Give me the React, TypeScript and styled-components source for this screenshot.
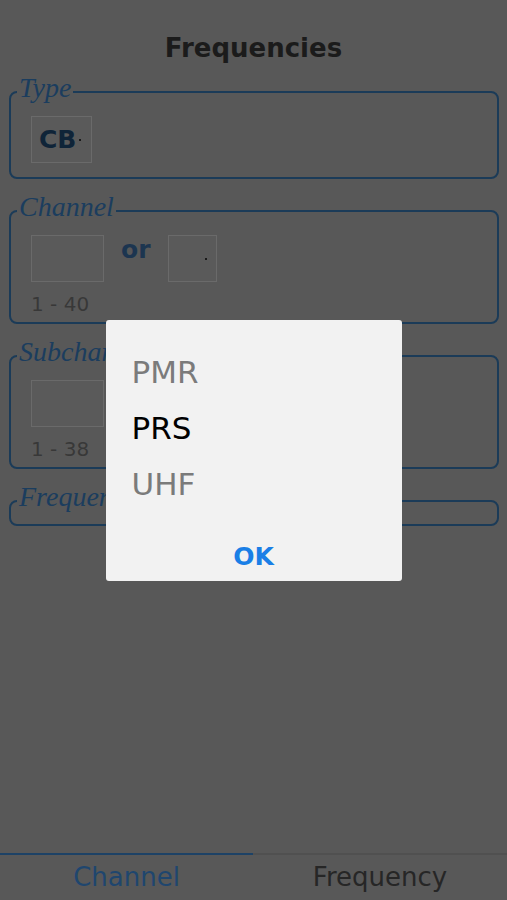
import styled, { createGlobalStyle } from "styled-components";

const GlobalStyle = createGlobalStyle`
  html, body {
    margin: 0;
    padding: 0;
    background: #585858;
  }
  body {
    font-family: "DejaVu Sans", sans-serif;
  }
`;

const Screen = styled.div`
  min-height: 100vh;
  display: flex;
  flex-direction: column;
`;

const Title = styled.h1`
  margin: 0;
  padding-top: 28px;
  font-size: 26px;
  line-height: 40px;
  font-weight: bold;
  text-align: center;
  color: #1b1b1b;
`;

const Form = styled.div`
  display: flex;
  flex-direction: column;
  gap: 14px;
  padding: 6px 8px 0 9px;
`;

// $bottom: space under the content, the Type group has no hint line
const Group = styled.fieldset<{ $bottom?: number; $empty?: boolean }>`
  margin: 0;
  min-width: 0;
  border: 2px solid #1b3b58;
  border-radius: 8px;
  padding: ${(p) =>
    p.$empty ? "0 6px 5px" : `6px 6px ${p.$bottom ?? 6}px`};
`;

const Legend = styled.legend`
  padding: 0 2px 8px;
  font-family: "Liberation Serif", serif;
  font-style: italic;
  font-size: 28px;
  line-height: 28px;
  color: #1b3d5e;
`;

const Content = styled.div`
  margin-left: 14px;
`;

const Row = styled.div`
  display: flex;
  align-items: flex-start;
  gap: 17px;
`;

const Box = styled.div<{ $w: number }>`
  box-sizing: border-box;
  width: ${(p) => p.$w}px;
  height: 47px;
  display: flex;
  align-items: center;
  padding: 0 7px;
  border: 1px solid #6a6a6a;
  background: #5a5a5a;
`;

const BoxText = styled.span`
  font-size: 25px;
  font-weight: bold;
  color: #0f2438;
`;

const Caret = styled.span<{ $push?: boolean }>`
  width: 2px;
  height: 2px;
  margin-left: ${(p) => (p.$push ? "auto" : "3px")};
  margin-right: ${(p) => (p.$push ? "2px" : "0")};
  background: #1a1a1a;
`;

const Or = styled.span`
  font-size: 25px;
  font-weight: bold;
  line-height: 30px;
  color: #1c3550;
`;

const Hint = styled.div`
  margin-top: 10px;
  font-size: 20px;
  line-height: 24px;
  color: #383838;
`;

const Tabs = styled.div`
  margin-top: auto;
  display: grid;
  grid-template-columns: 253px 1fr;
`;

const Tab = styled.div<{ $active?: boolean }>`
  height: 47px;
  box-sizing: border-box;
  border-top: 2px solid ${(p) => (p.$active ? "#1d4266" : "#505050")};
  text-align: center;
  font-size: 26px;
  line-height: 45px;
  color: ${(p) => (p.$active ? "#1f466e" : "#262626")};
`;

const Overlay = styled.div`
  position: fixed;
  inset: 0;
  display: flex;
  align-items: center;
  justify-content: center;
`;

const Dialog = styled.div`
  width: 296px;
  padding-top: 24px;
  border-radius: 3px;
  background: #f2f2f2;
`;

const Option = styled.div<{ $selected?: boolean }>`
  padding-left: 26px;
  font-size: 31px;
  line-height: 56px;
  color: ${(p) => (p.$selected ? "#000000" : "#7b7b7b")};
`;

const Footer = styled.div`
  padding-top: 21px;
  text-align: center;
`;

const OkButton = styled.button`
  border: none;
  background: none;
  padding: 0;
  font-family: "DejaVu Sans", sans-serif;
  font-size: 25px;
  font-weight: bold;
  line-height: 48px;
  color: #1a7fe6;
`;

const options = ["PMR", "PRS", "UHF"];

export default function App() {
  return (
    <>
      <GlobalStyle />
      <Screen>
        <Title>Frequencies</Title>
        <Form>
          <Group $bottom={14}>
            <Legend>Type</Legend>
            <Content>
              <Box $w={61}>
                <BoxText>CB</BoxText>
                <Caret />
              </Box>
            </Content>
          </Group>
          <Group>
            <Legend>Channel</Legend>
            <Content>
              <Row>
                <Box $w={73} />
                <Or>or</Or>
                <Box $w={49}>
                  <Caret $push />
                </Box>
              </Row>
              <Hint>1 - 40</Hint>
            </Content>
          </Group>
          <Group>
            <Legend>Subchannel</Legend>
            <Content>
              <Row>
                <Box $w={73} />
              </Row>
              <Hint>1 - 38</Hint>
            </Content>
          </Group>
          <Group $empty>
            <Legend>Frequency</Legend>
          </Group>
        </Form>
        <Tabs>
          <Tab $active>Channel</Tab>
          <Tab>Frequency</Tab>
        </Tabs>
      </Screen>
      <Overlay>
        <Dialog>
          {options.map((o) => (
            <Option key={o} $selected={o === "PRS"}>
              {o}
            </Option>
          ))}
          <Footer>
            <OkButton>OK</OkButton>
          </Footer>
        </Dialog>
      </Overlay>
    </>
  );
}
